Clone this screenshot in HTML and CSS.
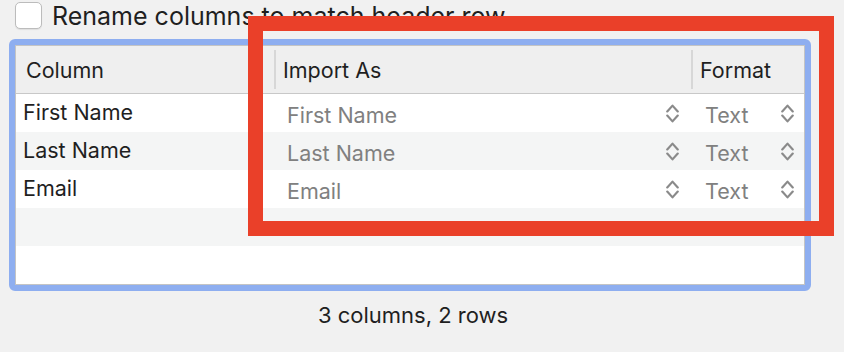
FILE: index.html
```html
<!DOCTYPE html>
<html lang="en">
<head>
  <meta charset="UTF-8" />
  <title>Import Columns</title>
  <link rel="stylesheet" href="styles.css">
</head>
<body>
  <!-- Header row option -->
  <div class="rename">
    <span class="checkbox"></span>
    <span class="rename-label">Rename columns to match header row</span>
  </div>

  <!-- Column mapping table -->
  <div class="frame">
    <div class="table">
      <div class="row head">
        <div class="cell">Column</div>
        <div class="cell sep">Import As</div>
        <div class="cell sep">Format</div>
      </div>

      <div class="row">
        <div class="cell name">First Name</div>
        <div class="cell popup first"><span>First Name</span><svg class="chev" viewBox="0 0 12 20"><path d="M1 8 L6 2.5 L11 8 M1 12 L6 17.5 L11 12"/></svg></div>
        <div class="cell popup fmt"><span>Text</span><svg class="chev" viewBox="0 0 12 20"><path d="M1 8 L6 2.5 L11 8 M1 12 L6 17.5 L11 12"/></svg></div>
      </div>
      <div class="row alt">
        <div class="cell name">Last Name</div>
        <div class="cell popup first"><span>Last Name</span><svg class="chev" viewBox="0 0 12 20"><path d="M1 8 L6 2.5 L11 8 M1 12 L6 17.5 L11 12"/></svg></div>
        <div class="cell popup fmt"><span>Text</span><svg class="chev" viewBox="0 0 12 20"><path d="M1 8 L6 2.5 L11 8 M1 12 L6 17.5 L11 12"/></svg></div>
      </div>
      <div class="row">
        <div class="cell name">Email</div>
        <div class="cell popup first"><span>Email</span><svg class="chev" viewBox="0 0 12 20"><path d="M1 8 L6 2.5 L11 8 M1 12 L6 17.5 L11 12"/></svg></div>
        <div class="cell popup fmt"><span>Text</span><svg class="chev" viewBox="0 0 12 20"><path d="M1 8 L6 2.5 L11 8 M1 12 L6 17.5 L11 12"/></svg></div>
      </div>
      <div class="row alt empty"></div>
    </div>
  </div>

  <p class="summary">3 columns, 2 rows</p>

  <!-- Highlight box over the Import As / Format columns -->
  <div class="callout"></div>
</body>
</html>
```

FILE: styles.css
```css
body {
  margin: 0;
  background: #f1f1f1;
  font-family: Inter, "Noto Sans", sans-serif;
  color: #1f1f1f;
  position: relative;
  height: 352px;
  overflow: hidden;
}
.rename {
  display: flex;
  align-items: center;
  gap: 10px;
  height: 29px;
  padding-left: 15px;
}
.checkbox {
  width: 27px;
  height: 27px;
  box-sizing: border-box;
  margin-top: 2px;
  background: #fff;
  border: 1px solid #bcbcbc;
  border-radius: 5px;
  box-shadow: 0 1px 1px rgba(0, 0, 0, 0.08);
}
.rename-label {
  font-size: 25px;
  line-height: 29px;
  padding-top: 3px;
}
.frame {
  margin: 10px 0 0 9px;
  width: 802px;
  height: 252px;
  box-sizing: border-box;
  border: 6px solid #8eaef0;
  border-radius: 6px;
}
.table {
  height: 100%;
  box-sizing: border-box;
  border: 1px solid #c4c4c4;
  background: #fff;
  font-size: 21.5px;
}
.row {
  display: grid;
  grid-template-columns: 258px 417px 1fr;
  height: 38px;
  align-items: center;
}
.row.alt {
  background: #f4f5f5;
}
.head {
  height: 47px;
  background: #efefef;
  border-bottom: 1px solid #c8c8c8;
}
.head .cell {
  padding-left: 10px;
  padding-top: 1px;
  position: relative;
}
.head .sep {
  padding-left: 9px;
}
.head .sep::before {
  content: "";
  position: absolute;
  left: 0;
  top: -6px;
  bottom: -6px;
  width: 2px;
  background: #d7d7d7;
}
.cell.name {
  padding-left: 7px;
  padding-bottom: 3px;
}
.popup {
  display: flex;
  align-items: center;
  justify-content: space-between;
  color: #808080;
  padding-top: 4px;
}
.popup.first {
  padding-left: 13px;
  padding-right: 12px;
}
.popup.fmt {
  padding-left: 14px;
  padding-right: 10px;
}
.chev {
  flex-shrink: 0;
  width: 13px;
  height: 21px;
  margin-top: -4px;
}
.chev path {
  fill: none;
  stroke: #8a8a8a;
  stroke-width: 2.1;
  stroke-linecap: round;
  stroke-linejoin: round;
}
.summary {
  margin: 11px 0 0 9px;
  width: 802px;
  padding-left: 6px;
  box-sizing: border-box;
  text-align: center;
  font-size: 22px;
  line-height: 26px;
}
.callout {
  position: absolute;
  left: 248px;
  top: 16px;
  width: 586px;
  height: 220px;
  box-sizing: border-box;
  border: 15px solid #ea4029;
}
```
